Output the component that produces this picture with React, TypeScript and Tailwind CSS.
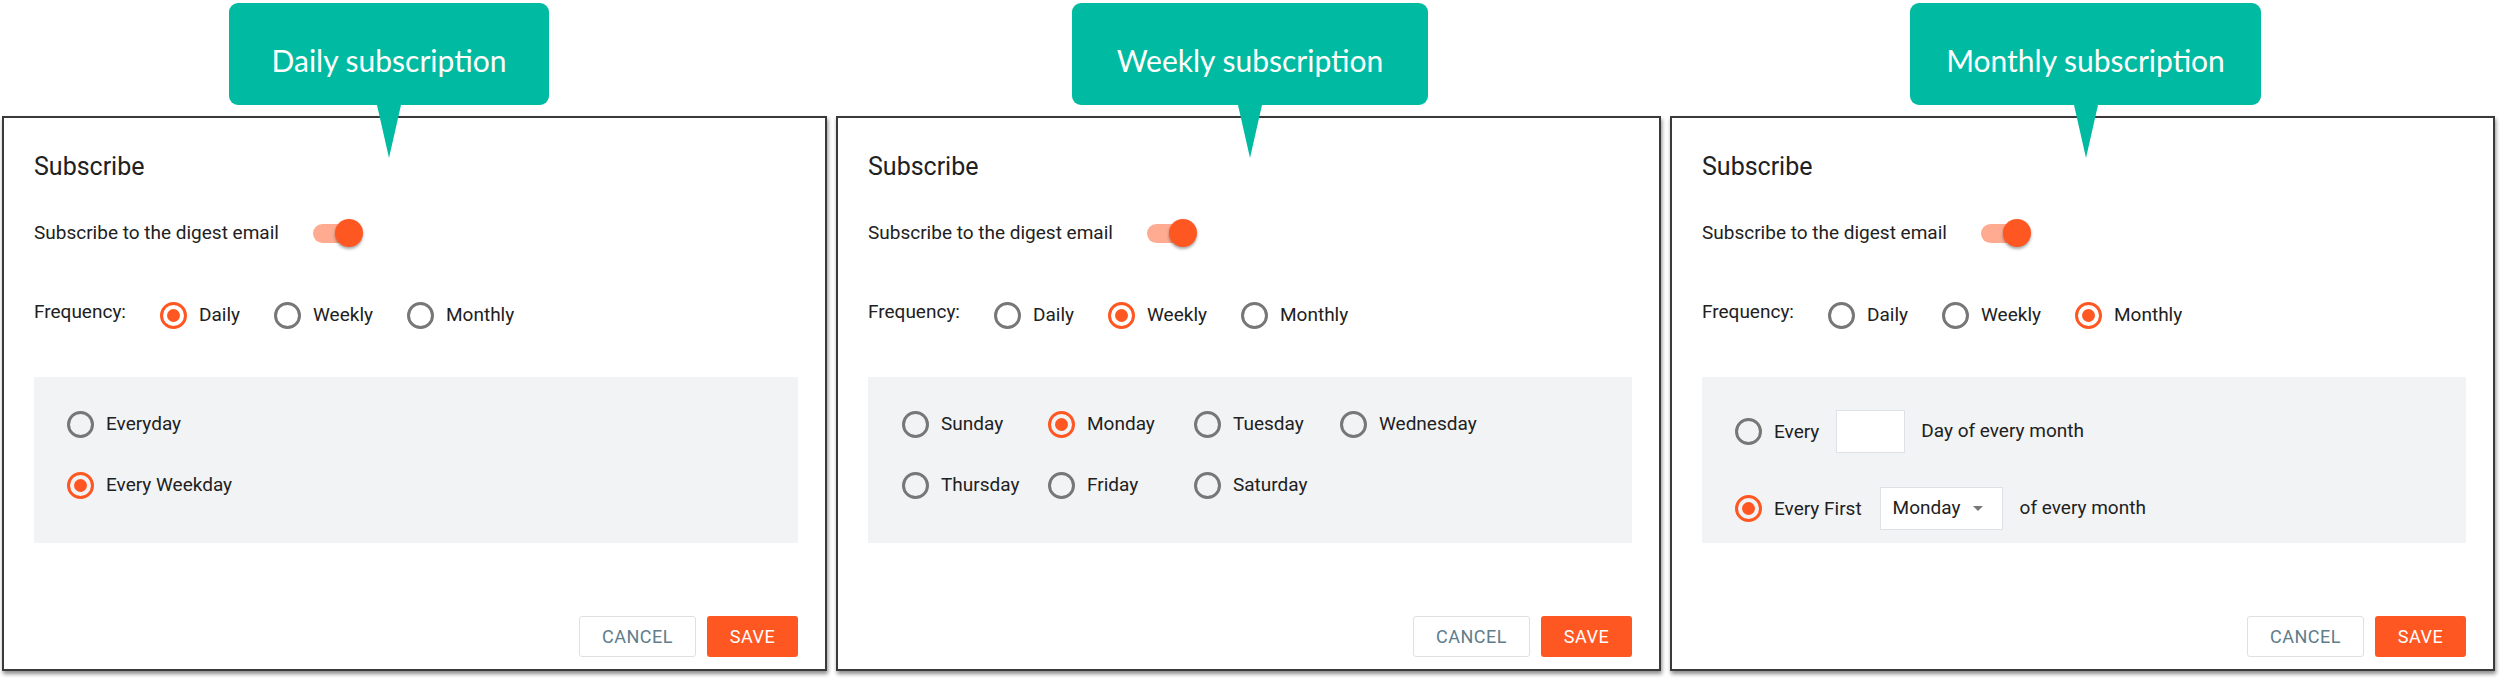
import type { ReactNode } from "react";
import { clsx } from "clsx";

function Callout({ text, className }: { text: string; className?: string }) {
  return (
    <div
      className={clsx(
        "relative flex h-[102px] justify-center rounded-[9px] bg-[#00bba1] pt-[39px] text-white",
        className,
      )}
    >
      <span className="font-['Lato',sans-serif] text-[30px] leading-[36px]">
        {text}
      </span>
      <svg
        className="absolute left-1/2 top-full z-10 -translate-x-1/2"
        width="24"
        height="53"
        viewBox="0 0 24 53"
      >
        <path d="M0 0 H24 L12 53 Z" fill="#00bba1" />
      </svg>
    </div>
  );
}

function Radio({ checked, label }: { checked?: boolean; label: string }) {
  return (
    <div className="flex items-center gap-[12px]">
      <span
        className={
          checked
            ? "flex h-[27px] w-[27px] shrink-0 items-center justify-center rounded-full border-[3px] border-[#ff5722]"
            : "flex h-[27px] w-[27px] shrink-0 items-center justify-center rounded-full border-[3px] border-[#777777]"
        }
      >
        {checked && <span className="h-[13px] w-[13px] rounded-full bg-[#ff5722]" />}
      </span>
      <span className="text-[19px] leading-[28px] text-[#212121]">{label}</span>
    </div>
  );
}

function Toggle() {
  return (
    <div className="ml-[34px] flex h-[28px] items-center">
      <span className="h-[19px] w-[34px] rounded-full bg-[#ffab91]" />
      <span className="-ml-[12px] h-[28px] w-[28px] rounded-full bg-[#ff5722] shadow-[0_2px_3px_rgba(0,0,0,0.35)]" />
    </div>
  );
}

function Panel({
  frequency,
  children,
}: {
  frequency: "Daily" | "Weekly" | "Monthly";
  children: ReactNode;
}) {
  return (
    <div className="mt-[11px] flex h-[555px] w-[825px] flex-col border-2 border-[#3a3a3a] bg-white pl-[30px] pr-[27px] pt-[35px] shadow-[1px_3px_4px_rgba(0,0,0,0.45)]">
      <h2 className="text-[25px] leading-[28px] text-[#212121]">Subscribe</h2>
      <div className="mt-[38px] flex h-[28px] items-center">
        <span className="text-[19px] text-[#212121]">
          Subscribe to the digest email
        </span>
        <Toggle />
      </div>
      <div className="mt-[54px] flex h-[28px] items-center">
        <span className="-mt-[5px] mr-[34px] text-[19px] text-[#212121]">
          Frequency:
        </span>
        <div className="flex gap-[34px]">
          <Radio label="Daily" checked={frequency === "Daily"} />
          <Radio label="Weekly" checked={frequency === "Weekly"} />
          <Radio label="Monthly" checked={frequency === "Monthly"} />
        </div>
      </div>
      <div className="mt-[48px] h-[166px] bg-[#f2f3f5] pl-[33px] pt-[33px]">
        {children}
      </div>
      <div className="mt-[73px] flex justify-end gap-[11px]">
        <button className="h-[41px] w-[117px] rounded-[3px] border border-[#e0e0e0] bg-white text-[18px] tracking-[0.5px] text-[#607d8b]">
          CANCEL
        </button>
        <button className="h-[41px] w-[91px] rounded-[3px] bg-[#ff5722] text-[18px] tracking-[0.5px] text-white">
          SAVE
        </button>
      </div>
    </div>
  );
}

export default function App() {
  return (
    <div className="flex h-[679px] w-[2500px] gap-[9px] overflow-hidden bg-white pl-[2px] font-['Roboto',sans-serif]">
      <div className="flex flex-col pt-[3px]">
        <Callout text="Daily subscription" className="ml-[227px] w-[320px]" />
        <Panel frequency="Daily">
          <div className="flex flex-col gap-[33px]">
            <Radio label="Everyday" />
            <Radio label="Every Weekday" checked />
          </div>
        </Panel>
      </div>

      <div className="flex flex-col pt-[3px]">
        <Callout text="Weekly subscription" className="ml-[236px] w-[356px]" />
        <Panel frequency="Weekly">
          <div className="grid grid-cols-[146px_146px_146px_146px] gap-y-[33px] pl-[1px]">
            <Radio label="Sunday" />
            <Radio label="Monday" checked />
            <Radio label="Tuesday" />
            <Radio label="Wednesday" />
            <Radio label="Thursday" />
            <Radio label="Friday" />
            <Radio label="Saturday" />
          </div>
        </Panel>
      </div>

      <div className="flex flex-col pt-[3px]">
        <Callout text="Monthly subscription" className="ml-[240px] w-[351px]" />
        <Panel frequency="Monthly">
          <div className="flex flex-col gap-[34px]">
            <div className="flex h-[43px] items-center">
              <Radio label="Every" />
              <span className="ml-[17px] h-[43px] w-[69px] border border-[#dde2e6] bg-white" />
              <span className="ml-[16px] text-[19px] text-[#212121]">
                Day of every month
              </span>
            </div>
            <div className="flex h-[43px] items-center">
              <Radio label="Every First" checked />
              <div className="ml-[18px] flex h-[43px] w-[123px] items-center border border-[#dde2e6] bg-white pl-[12px]">
                <span className="text-[19px] text-[#212121]">Monday</span>
                <svg className="ml-[13px]" width="10" height="5" viewBox="0 0 10 5">
                  <path d="M0 0 H10 L5 5 Z" fill="#777777" />
                </svg>
              </div>
              <span className="ml-[17px] text-[19px] text-[#212121]">
                of every month
              </span>
            </div>
          </div>
        </Panel>
      </div>
    </div>
  );
}
